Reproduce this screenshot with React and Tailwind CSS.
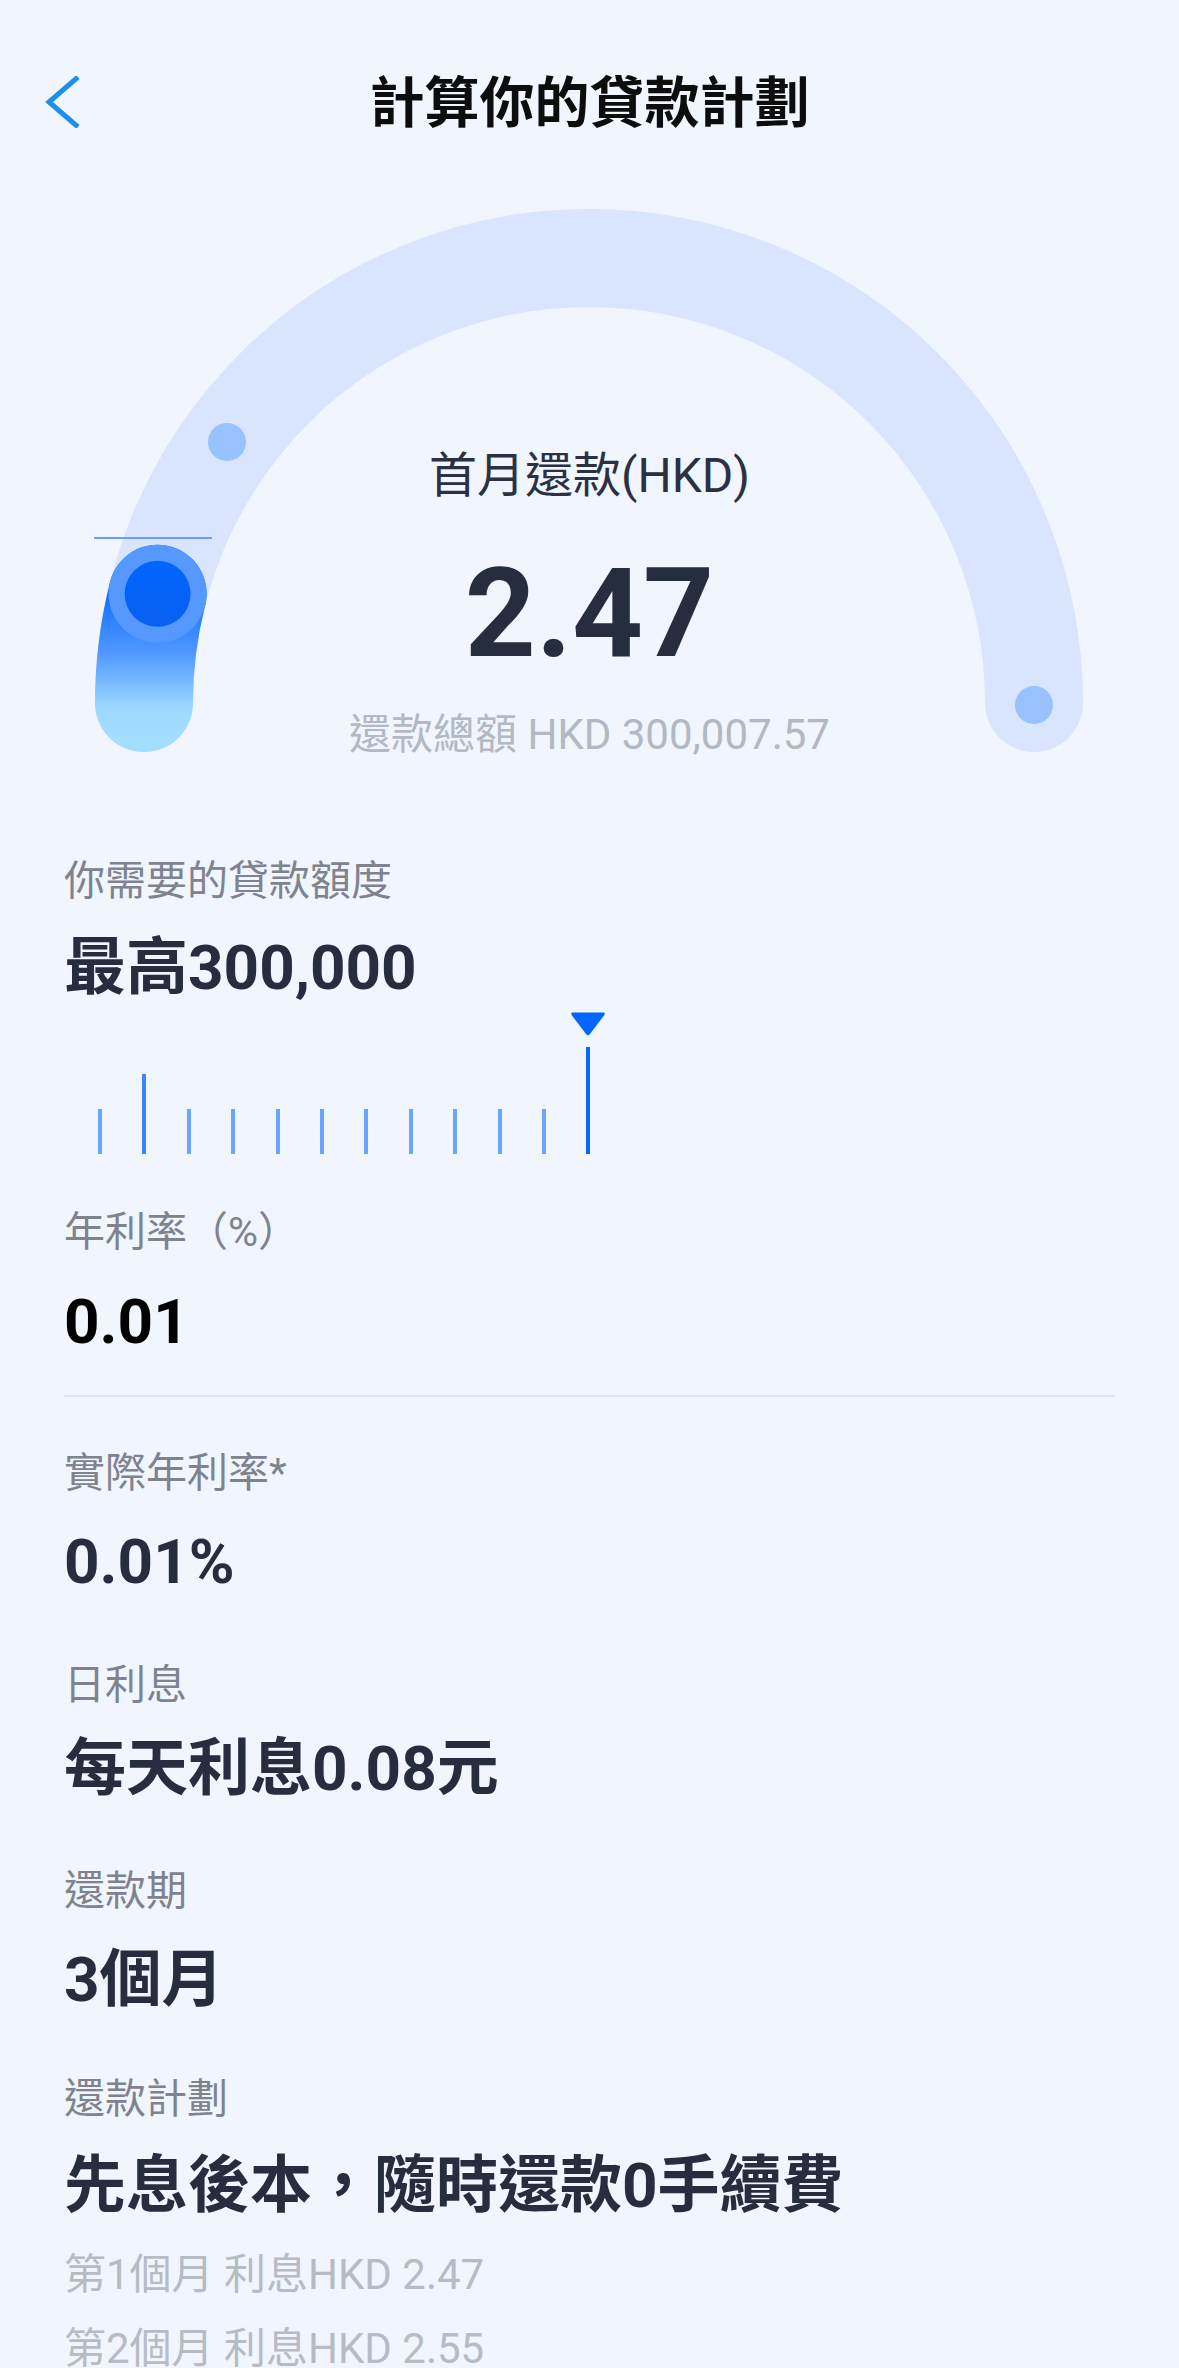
import React from "react";

const ticks = [
  { h: "h-[45px]", c: "bg-[#6AA5FF]" },
  { h: "h-[80px]", c: "bg-[#3A84FF]" },
  { h: "h-[45px]", c: "bg-[#6AA5FF]" },
  { h: "h-[45px]", c: "bg-[#6AA5FF]" },
  { h: "h-[45px]", c: "bg-[#6AA5FF]" },
  { h: "h-[45px]", c: "bg-[#6AA5FF]" },
  { h: "h-[45px]", c: "bg-[#6AA5FF]" },
  { h: "h-[45px]", c: "bg-[#6AA5FF]" },
  { h: "h-[45px]", c: "bg-[#6AA5FF]" },
  { h: "h-[45px]", c: "bg-[#6AA5FF]" },
  { h: "h-[45px]", c: "bg-[#6AA5FF]" },
];

const Gauge = () => {
  return (
    <div className="relative h-[600px]">
      <svg className="absolute inset-0" width="1179" height="600" viewBox="0 0 1179 600">
        <defs>
          <linearGradient id="prog" x1="0" y1="400" x2="0" y2="560" gradientUnits="userSpaceOnUse">
            <stop offset="0" stopColor="#0066FF" />
            <stop offset="0.45" stopColor="#4F97FF" />
            <stop offset="0.8" stopColor="#9DD9FF" />
            <stop offset="1" stopColor="#A3DDFF" />
          </linearGradient>
          <linearGradient id="knob" x1="0" y1="380" x2="0" y2="450" gradientUnits="userSpaceOnUse">
            <stop offset="0" stopColor="#0066FF" />
            <stop offset="1" stopColor="#0A5FEF" />
          </linearGradient>
        </defs>
        {/* track */}
        <path d="M 144 523 A 445 445 0 0 1 1034 523" fill="none" stroke="#D8E5FD" strokeWidth="98" strokeLinecap="round" />
        {/* progress */}
        <path d="M 144 523 A 445 445 0 0 1 157.6 413.8" fill="none" stroke="url(#prog)" strokeWidth="98" strokeLinecap="round" />
        <line x1="94" y1="358" x2="212" y2="358" stroke="#6C9EF5" strokeWidth="2" />
        <circle cx="157.6" cy="413.8" r="49" fill="#5598FF" />
        <circle cx="157.6" cy="413.8" r="33" fill="url(#knob)" />
        <circle cx="227" cy="262" r="19" fill="#97C1FF" />
        <circle cx="1034" cy="525" r="19" fill="#97C1FF" />
      </svg>
      <div className="relative flex flex-col items-center pt-[272px]">
        <div className="text-[48px] leading-none text-[#2B3142]">首月還款(HKD)</div>
        <div className="mt-[52px] text-[124px] font-bold leading-none text-[#262D3F]">2.47</div>
        <div className="mt-[38px] text-[42px] leading-none text-[#B3B8C2]">還款總額 HKD 300,007.57</div>
      </div>
    </div>
  );
};

const Label = ({ className = "", children }) => (
  <div className={`text-[41px] leading-none text-[#7E838E] ${className}`}>{children}</div>
);

const Value = ({ className = "", children }) => (
  <div className={`text-[62px] font-bold leading-none text-[#262D3F] ${className}`}>{children}</div>
);

export default function App() {
  return (
    <div className="w-[1179px] h-[2368px] overflow-hidden bg-[#F0F5FE] font-[Roboto,'Noto_Sans_CJK_TC',sans-serif]">
      <div className="grid grid-cols-[1fr_auto_1fr] items-start h-[180px] pt-[76px] px-[45px]">
        <svg width="36" height="52" viewBox="0 0 36 52">
          <polyline points="33,1 4,26 33,51" fill="none" stroke="#1E8FEA" strokeWidth="5" />
        </svg>
        <div className="text-[55px] font-bold leading-none text-[#0D0D0D]">計算你的貸款計劃</div>
        <div />
      </div>

      <Gauge />

      <div className="px-[64px]">
        <Label className="mt-[81px]">你需要的貸款額度</Label>
        <Value className="mt-[35px]">最高300,000</Value>

        <div className="mt-[12px] flex h-[143px] items-end gap-[40.4px] pl-[34px]">
          {ticks.map((t, i) => (
            <div key={i} className={`w-[4px] ${t.h} ${t.c}`} />
          ))}
          <div className="relative w-[4px] h-[107px] bg-[#0A66F5]">
            <svg className="absolute left-[-16px] top-[-36px]" width="36" height="26" viewBox="0 0 36 26">
              <path d="M3 1.5 H33 Q36 1.5 34 4.5 L20 23 Q18 25.5 16 23 L2 4.5 Q0 1.5 3 1.5 Z" fill="#0066FF" />
            </svg>
          </div>
        </div>

        <Label className="mt-[58px]">年利率（%）</Label>
        <Value className="mt-[38px] !text-black">0.01</Value>

        <div className="mt-[42px] h-[2px] bg-[#E1E3EA]" />

        <Label className="mt-[56px]">實際年利率*</Label>
        <Value className="mt-[37px]">0.01%</Value>

        <Label className="mt-[72px]">日利息</Label>
        <Value className="mt-[32px]">每天利息0.08元</Value>

        <Label className="mt-[71px]">還款期</Label>
        <Value className="mt-[37px]">3個月</Value>

        <Label className="mt-[68px]">還款計劃</Label>
        <Value className="mt-[35px]">先息後本，隨時還款0手續費</Value>

        <div className="mt-[37px] text-[42px] leading-none text-[#B7BBC4]">第1個月 利息HKD 2.47</div>
        <div className="mt-[32px] text-[42px] leading-none text-[#B7BBC4]">第2個月 利息HKD 2.55</div>
      </div>
    </div>
  );
}
